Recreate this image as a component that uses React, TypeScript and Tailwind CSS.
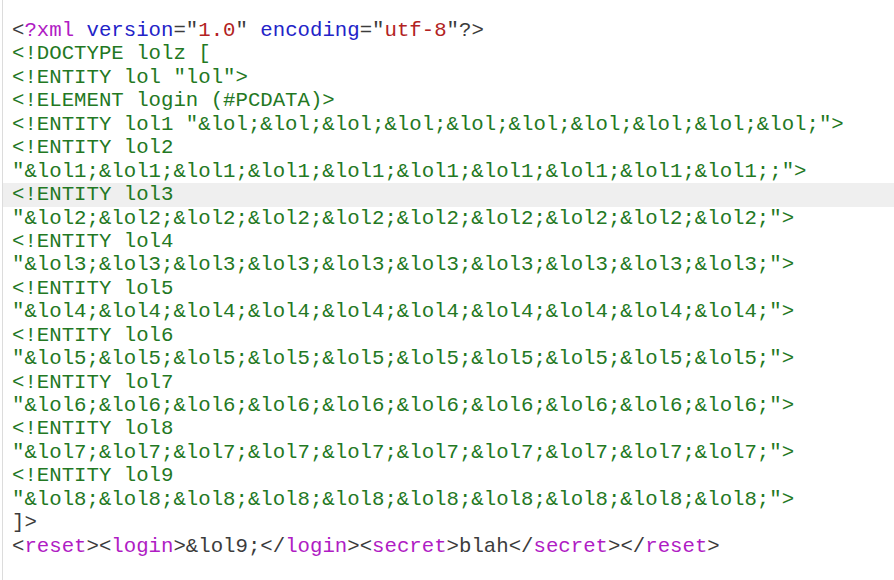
type Seg = [string, string];

const gray = "text-[#3c3c3c]";
const purple = "text-[#b01cc4]";
const blue = "text-[#2323c8]";
const red = "text-[#b22222]";
const green = "text-[#237823]";

const entity = (n: number) => {
  const ref = n === 1 ? "&lol;" : `&lol${n - 1};`;
  const tail = n === 2 ? ';">' : '">';
  if (n === 1) {
    return [[`<!ENTITY lol1 "${ref.repeat(10)}${tail}`]];
  }
  return [[`<!ENTITY lol${n}`], [`"${ref.repeat(10)}${tail}`]];
};

const lines: Seg[][] = [
  [
    [gray, "<"],
    [purple, "?xml"],
    [blue, " version"],
    [gray, '="'],
    [red, "1.0"],
    [gray, '"'],
    [blue, " encoding"],
    [gray, '="'],
    [red, "utf-8"],
    [gray, '"?>'],
  ],
  [[green, "<!DOCTYPE lolz ["]],
  [[green, '<!ENTITY lol "lol">']],
  [[green, "<!ELEMENT login (#PCDATA)>"]],
  ...[1, 2, 3, 4, 5, 6, 7, 8, 9].flatMap((n) =>
    entity(n).map((l) => [[green, l[0]] as Seg]),
  ),
  [[gray, "]>"]],
  [
    [gray, "<"],
    [purple, "reset"],
    [gray, "><"],
    [purple, "login"],
    [gray, ">&lol9;</"],
    [purple, "login"],
    [gray, "><"],
    [purple, "secret"],
    [gray, ">blah</"],
    [purple, "secret"],
    [gray, "></"],
    [purple, "reset"],
    [gray, ">"],
  ],
];

export default function App() {
  return (
    <div className="h-[580px] w-full overflow-hidden bg-white pl-[2px]">
      <div className="h-full border-l border-[#dcdcdc] pt-[19px] font-['Liberation_Mono','Courier_New',monospace] text-[20.7px] leading-[23.45px]">
        {lines.map((segs, i) => (
          <div
            key={i}
            className={`h-[23.45px] whitespace-pre pl-[9px] ${i === 7 ? "bg-[#efefef]" : ""}`}
          >
            {segs.map(([cls, text], j) => (
              <span key={j} className={cls}>
                {text}
              </span>
            ))}
          </div>
        ))}
      </div>
    </div>
  );
}
